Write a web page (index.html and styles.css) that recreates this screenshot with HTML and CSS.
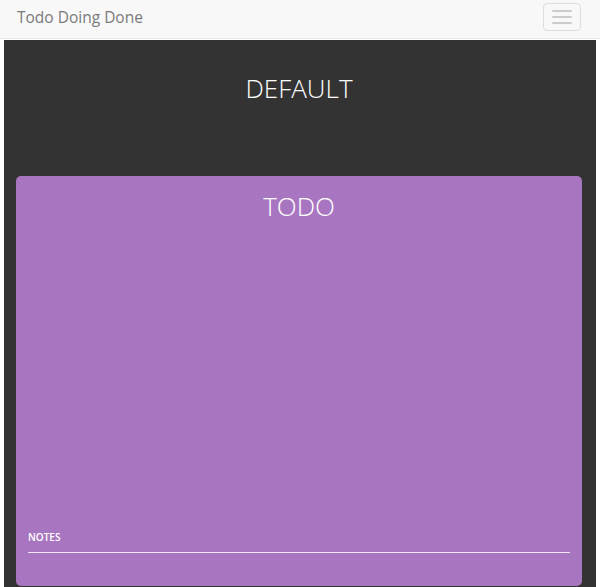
FILE: index.html
```html
<!DOCTYPE html>
<html>
<head>
<meta charset="utf-8">
<link rel="stylesheet" href="styles.css">
</head>
<body>
<nav class="navbar">
  <span class="brand">Todo Doing Done</span>
  <button class="toggle"><span class="bar"></span><span class="bar"></span><span class="bar"></span></button>
</nav>
<main class="board">
  <h1 class="board-title">DEFAULT</h1>
  <section class="list">
    <h2 class="list-title">TODO</h2>
    <div class="notes">
      <label class="notes-label">NOTES</label>
      <div class="notes-line"></div>
    </div>
  </section>
</main>
</body>
</html>
```
FILE: styles.css
```css
* { box-sizing: border-box; }
html, body { margin: 0; padding: 0; height: 100%; overflow: hidden; }
body {
  font-family: "Open Sans", "Liberation Sans", sans-serif;
  background: #fff;
}
.navbar {
  height: 39px;
  background: #f8f8f8;
  border-bottom: 1px solid #e7e7e7;
  display: flex;
  align-items: center;
  justify-content: space-between;
  padding: 0 19px 4px 17px;
}
.brand {
  font-size: 15.5px;
  color: #7a7a7a;
}
.toggle {
  width: 38px;
  height: 28px;
  border: 1px solid #ddd;
  border-radius: 4px;
  background: transparent;
  display: flex;
  flex-direction: column;
  align-items: center;
  justify-content: center;
  gap: 4px;
  padding: 0;
}
.bar {
  display: block;
  width: 20px;
  height: 2px;
  background: #ccc;
  border-radius: 1px;
}
.board {
  margin: 1px 4px 0;
  background: #333;
  height: 547px;
  padding: 30px 14px 1px 12px;
  display: flex;
  flex-direction: column;
}
.board-title {
  margin: 0;
  text-align: center;
  font-weight: 300;
  font-size: 26px;
  line-height: 36px;
  color: #fff;
  height: 106px;
}
.list {
  flex: 1;
  background: #a876c0;
  border-radius: 5px;
  padding: 12px 12px 0;
  display: flex;
  flex-direction: column;
}
.list-title {
  margin: 0;
  text-align: center;
  font-weight: 300;
  font-size: 26px;
  line-height: 36px;
  color: #fff;
}
.notes {
  margin-top: auto;
  margin-bottom: 33px;
}
.notes-label {
  display: block;
  font-size: 10px;
  font-weight: 600;
  color: #fff;
  margin-bottom: 8px;
}
.notes-line {
  height: 1px;
  background: #f3e6f8;
}
```
